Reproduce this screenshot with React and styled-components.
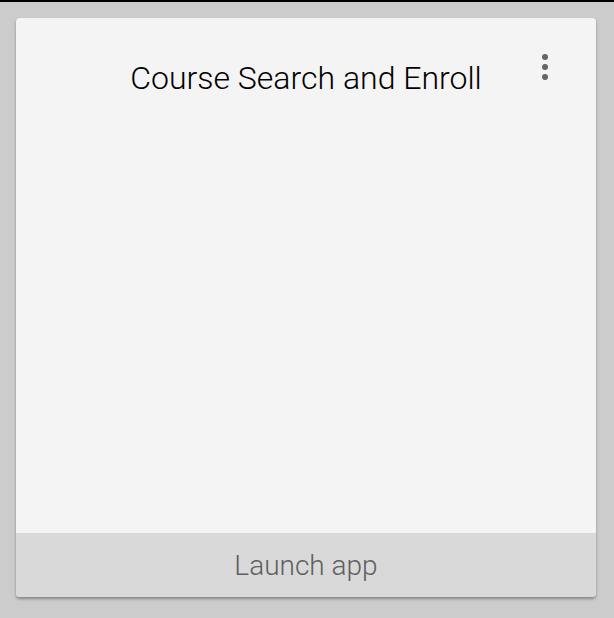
import styled, { createGlobalStyle } from "styled-components";

const GlobalStyle = createGlobalStyle`
  html, body {
    margin: 0;
    padding: 0;
    background: #cccccc;
    font-family: Roboto, "Liberation Sans", sans-serif;
  }
`

const Page = styled.div`
  width: 614px;
  height: 618px;
  border-top: 2px solid #000;
  box-sizing: border-box;
  padding: 16px 18px 0 16px;
`
const Card = styled.div`
  width: 580px;
  height: 579px;
  display: flex;
  flex-direction: column;
  background-color: #f4f4f4;
  border-radius: 4px;
  overflow: hidden;
  box-shadow: 0px 2px 3px rgba(0, 0, 0, 0.35);
  position: relative;
`
const Header = styled.div`
  flex: 1;
  display: flex;
  justify-content: center;
  padding-top: 40px;
`
const Title = styled.h2`
  margin: 0;
  font-size: 32px;
  font-weight: 300;
  line-height: 40px;
  color: #000;
`
const MenuButton = styled.button`
  position: absolute;
  top: 31px;
  right: 39px;
  width: 24px;
  height: 36px;
  padding: 0;
  border: 0;
  background: transparent;
  display: flex;
  flex-direction: column;
  align-items: center;
  justify-content: center;
  gap: 4px;
  cursor: pointer;
`
const Dot = styled.span`
  width: 6px;
  height: 6px;
  border-radius: 50%;
  background-color: #666;
`
const Footer = styled.div`
  height: 64px;
  display: flex;
  align-items: center;
  justify-content: center;
  background-color: #d9d9d9;
  font-size: 28px;
  font-weight: 300;
  color: #606060;
  cursor: pointer;
`

function App() {
  return (
    <Page>
      <GlobalStyle />
      <Card>
        <Header>
          <Title>Course Search and Enroll</Title>
        </Header>
        <MenuButton aria-label="More options">
          <Dot />
          <Dot />
          <Dot />
        </MenuButton>
        <Footer>Launch app</Footer>
      </Card>
    </Page>
  )
}
export default App
